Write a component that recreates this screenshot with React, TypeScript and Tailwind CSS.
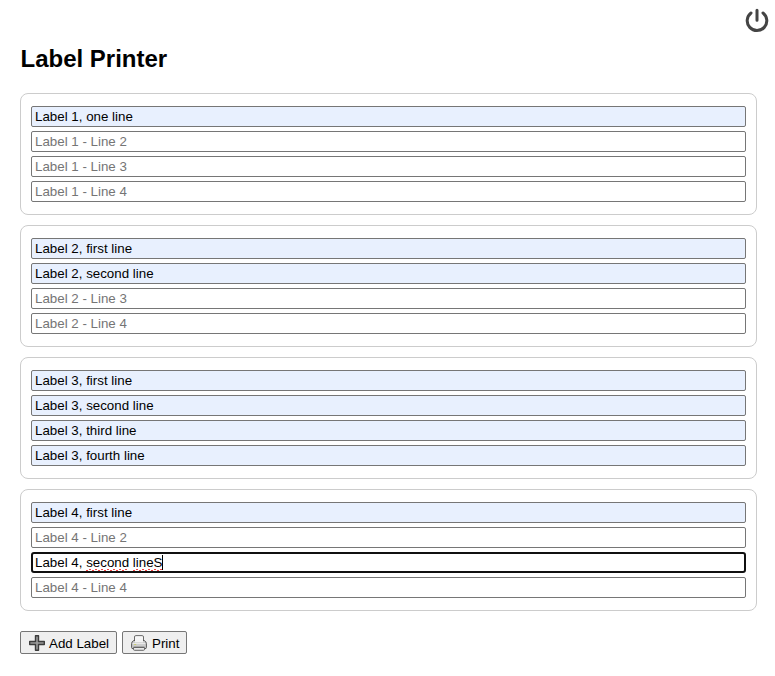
type Line = { text?: string; hint: string; active?: boolean };

const labels: Line[][] = [
  ['Label 1, one line'],
  ['Label 2, first line', 'Label 2, second line'],
  ['Label 3, first line', 'Label 3, second line', 'Label 3, third line', 'Label 3, fourth line'],
  ['Label 4, first line', '', 'Label 4, second lineS'],
].map((texts, i) =>
  [0, 1, 2, 3].map((n) => ({
    text: texts[n],
    hint: `Label ${i + 1} - Line ${n + 1}`,
    active: i === 3 && n === 2,
  })),
);

function Squiggle({ width }: { width: number }) {
  const count = Math.ceil(width / 6);
  return (
    <svg className="absolute left-0 top-[13px]" width={width} height="3" viewBox={`0 0 ${width} 3`} fill="#f04444">
      {Array.from({ length: count }, (_, i) => (
        <g key={i}>
          <path d={`M${i * 6} 2h2v1h-2z`} />
          <path d={`M${i * 6 + 3} 1h2v1h-2z`} />
        </g>
      ))}
    </svg>
  );
}

function Field({ text, hint, active }: Line) {
  if (active) {
    return (
      <div className="flex h-[21px] items-center rounded-[3px] border-2 border-[#101010] bg-white pl-0.5 text-black whitespace-pre">
        <span>Label 4, </span>
        <span className="relative leading-[15px]">second<Squiggle width={42} /></span>
        <span> </span>
        <span className="relative leading-[15px]">lineS<Squiggle width={29} /></span>
        <span className="h-[15px] w-px bg-black" />
      </div>
    );
  }
  return (
    <div className={`flex h-[21px] items-center rounded-[2px] border border-[#767676] pl-[3px] ${text ? 'bg-[#e8f0fe] text-black' : 'bg-white text-[#757575]'}`}>
      {text || hint}
    </div>
  );
}

function PlusIcon() {
  return (
    <svg className="mt-px" width="16" height="16" viewBox="0 0 16 16">
      <path d="M6.5.7h3v5.8h5.8v3H9.5v5.8h-3V9.5H.7v-3h5.8z" fill="#999" stroke="#3c3c3c" strokeWidth="1.4" strokeLinejoin="round" />
    </svg>
  );
}

function PrinterIcon() {
  return (
    <svg className="mt-px" width="16" height="16" viewBox="0 0 16 16">
      <path d="M3.5 6V2q0-1.4 1.3-1.4h6.4q1.3 0 1.3 1.4v4z" fill="#f6f6f6" stroke="#6a6a6a" />
      <path d="M2.8 5.5h10.4q2.2 1.2 2.2 3v4q0 1.2-1.4 1.2H2Q.6 13.7.6 12.5v-4q0-1.8 2.2-3z" fill="#cdcdcd" stroke="#585858" />
      <path d="M4 4.5h8v2.8H4z" fill="#f4f4f4" />
      <path d="M1.8 8.5h12.4" stroke="#e9e9e9" />
      <path d="M3.2 9.5h2" stroke="#c9cd6b" />
      <path d="M2.5 11.5h11" stroke="#a9a9a9" />
      <path d="M2.5 12.5h11v1.8q0 1-1 1h-9q-1 0-1-1z" fill="#e8e8e8" stroke="#666" />
    </svg>
  );
}

export default function App() {
  return (
    <main className="relative h-[676px] bg-white pl-5 pr-[18px] pt-[45px] font-['Liberation_Sans',Arial,sans-serif] text-[13.333px] text-black">
      <svg className="absolute left-[745px] top-[8px]" width="24" height="25" viewBox="0 0 24 25" fill="none" stroke="#444" strokeWidth="3" strokeLinecap="round">
        <path d="M6 5a9.8 9.8 0 1 0 12 0M12 2.3v9.9" />
      </svg>
      <h1 className="pl-[0.5px] text-2xl leading-7 font-bold">Label Printer</h1>
      <div className="mt-5 flex flex-col gap-2.5">
        {labels.map((lines, i) => (
          <section key={i} className="flex h-[122px] flex-col gap-1 rounded-lg border border-[#ccc] px-2.5 pt-3">
            {lines.map((line) => <Field key={line.hint} {...line} />)}
          </section>
        ))}
      </div>
      <div className="mt-5 flex gap-[5px]">
        <button className="flex h-[23px] w-[97px] items-center gap-1 rounded-[2px] border border-[#767676] bg-[#efefef] pl-2 whitespace-nowrap">
          <PlusIcon /><span className="pt-0.5">Add Label</span>
        </button>
        <button className="flex h-[23px] w-[65px] items-center gap-1 rounded-[2px] border border-[#767676] bg-[#efefef] pl-2 whitespace-nowrap">
          <PrinterIcon /><span className="pt-0.5 pl-px">Print</span>
        </button>
      </div>
    </main>
  );
}
